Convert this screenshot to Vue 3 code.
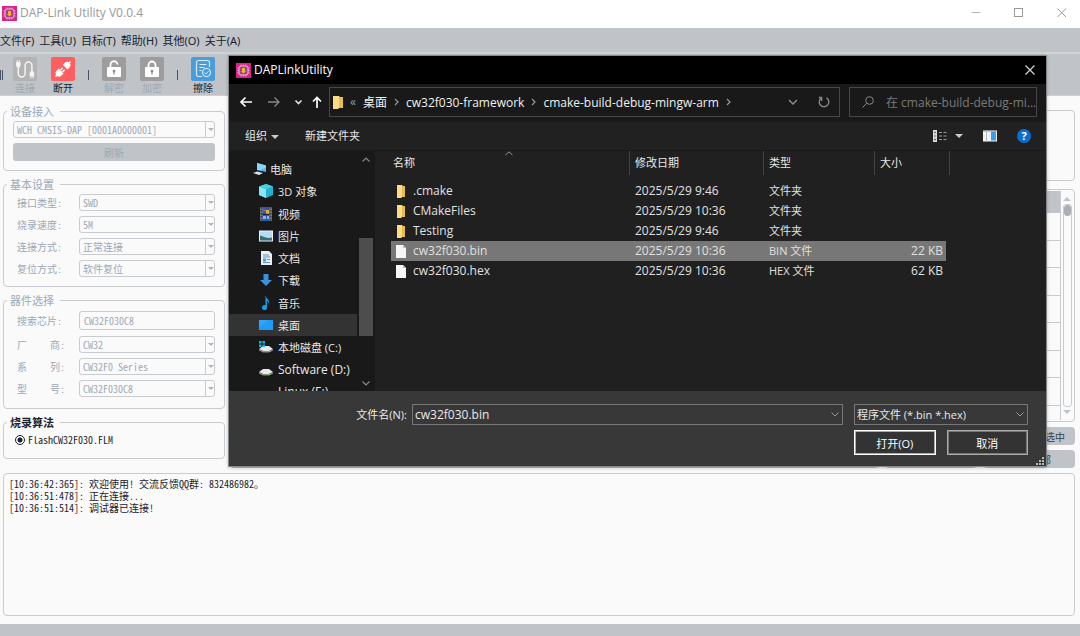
<script setup>
import { ref } from 'vue'

const menus = ['文件(F)', '工具(U)', '目标(T)', '帮助(H)', '其他(O)', '关于(A)']

const basic = [
  { id: 'iface', label: '接口类型:', value: 'SWD' },
  { id: 'speed', label: '烧录速度:', value: '5M' },
  { id: 'connect', label: '连接方式:', value: '正常连接' },
  { id: 'reset', label: '复位方式:', value: '软件复位' },
]
const chip = [
  { id: 'vendor', a: '厂', b: '商:', value: 'CW32' },
  { id: 'series', a: '系', b: '列:', value: 'CW32F0 Series' },
  { id: 'model', a: '型', b: '号:', value: 'CW32F030C8' },
]
const logs = [
  '[10:36:42:365]: 欢迎使用! 交流反馈QQ群: 832486982。',
  '[10:36:51:478]: 正在连接...',
  '[10:36:51:514]: 调试器已连接!',
]
const places = [
  { icon: 'pc', name: '电脑', root: true },
  { icon: 'cube', name: '3D 对象' },
  { icon: 'video', name: '视频' },
  { icon: 'image', name: '图片' },
  { icon: 'doc', name: '文档' },
  { icon: 'down', name: '下载' },
  { icon: 'music', name: '音乐' },
  { icon: 'desk', name: '桌面', active: true },
  { icon: 'diskc', name: '本地磁盘 (C:)' },
  { icon: 'disk', name: 'Software (D:)', latin: true },
  { icon: 'disk', name: 'Linux (E:)', latin: true },
]
const files = [
  { name: '.cmake', date: '2025/5/29 9:46', type: '文件夹', size: '', dir: true },
  { name: 'CMakeFiles', date: '2025/5/29 10:36', type: '文件夹', size: '', dir: true },
  { name: 'Testing', date: '2025/5/29 9:46', type: '文件夹', size: '', dir: true },
  { name: 'cw32f030.bin', date: '2025/5/29 10:36', type: 'BIN 文件', size: '22 KB' },
  { name: 'cw32f030.hex', date: '2025/5/29 10:36', type: 'HEX 文件', size: '62 KB' },
]
const selected = ref('cw32f030.bin')
const fileName = ref('cw32f030.bin')
const keyword = ref('CW32F030C8')
const algo = ref('flash')
</script>

<template>
  <div class="window">
    <header class="titlebar">
      <svg class="appicon" viewBox="0 0 15 15">
        <rect width="15" height="15" fill="#e0218a" />
        <rect x="3" y="3" width="9" height="9" rx="2" fill="#a3427e" stroke="#d9c3e6" stroke-width="1" />
        <path d="M5 1.5v1.5M7.500 1.500v1.500M10 1.500v1.500M5 12v1.500M7.500 12v1.500M10 12v1.500M1.500 5h1.500M1.500 7.500h1.500M1.500 10h1.500M12 5h1.500M12 7.500h1.500M12 10h1.500" stroke="#d9a8dc" stroke-width="1" />
        <path d="M6 5h3v3h1l-2.500 2.500L5 8h1z" fill="#f0b81c" />
      </svg>
      <h1>DAP-Link Utility V0.0.4</h1>
      <div class="winbtns">
        <button aria-label="最小化"><svg viewBox="0 0 10 10"><path d="M.500 4.500h9" stroke="#bbb" /></svg></button>
        <button aria-label="最大化"><svg viewBox="0 0 10 10"><rect x=".5" y=".5" width="8" height="8" fill="none" stroke="#999" /></svg></button>
        <button aria-label="关闭"><svg viewBox="0 0 10 10"><path d="M.500.500l8.500 8.500M9 .500L.500 9" stroke="#999" /></svg></button>
      </div>
    </header>

    <nav class="menubar">
      <button v-for="m in menus" :key="m">{{ m }}</button>
    </nav>

    <div class="toolbar">
      <span class="grip"></span>
      <button class="tool" disabled>
        <svg class="ticon" viewBox="0 0 24 24"><rect width="24" height="24" rx="2" fill="#b3b3b3" /><path d="M5.300 9v7.500a3.400 3.400 0 0 0 6.800 0V8.500a3.400 3.400 0 0 1 6.800 0V15" fill="none" stroke="#f4f4f4" stroke-width="1.500" /><path d="M3 5h4.600v3.500L6.500 10.500H4L3 8.500z" fill="#f4f4f4" /><path d="M4.200 3v2M6.400 3v2" stroke="#f4f4f4" /><path d="M17.700 14h2.500l1 2v3.500h-4.600V16z" fill="#f4f4f4" /><path d="M17.800 19.500v2M20 19.500v2" stroke="#f4f4f4" /></svg>
        <span>连接</span>
      </button>
      <button class="tool">
        <svg class="ticon" viewBox="0 0 24 24"><rect width="24" height="24" rx="2" fill="#ff5f5f" /><g fill="#fff"><path d="M11.800 7.800l4.600 4.600 2-2a3.300 3.300 0 0 0 0-4.600 3.300 3.300 0 0 0-4.600 0z" /><path d="M7.700 11.500l4.900 4.900-2 2a3.400 3.400 0 0 1-4.900-4.900z" /></g><path d="M17.500 6.500L19.500 4.500M4.500 19.500l2-2M9.500 13l2.200-2.200M11.400 14.900l2.200-2.200" stroke="#fff" stroke-width="1.500" /></svg>
        <span>断开</span>
      </button>
      <span class="sep"></span>
      <button class="tool" disabled>
        <svg class="ticon" viewBox="0 0 24 24"><rect width="24" height="24" rx="2" fill="#9d9d9d" /><path d="M8.500 11V8a3.500 3.500 0 0 1 7-.5" fill="none" stroke="#fff" stroke-width="1.800" /><rect x="5" y="10" width="14" height="10" rx="1" fill="#fff" /><path d="M12 14v3.500" stroke="#888" stroke-width="1.200" /><circle cx="12" cy="14" r="1.300" fill="#888" /></svg>
        <span>解密</span>
      </button>
      <button class="tool" disabled>
        <svg class="ticon" viewBox="0 0 24 24"><rect width="24" height="24" rx="2" fill="#9d9d9d" /><path d="M8.500 11V8a3.500 3.500 0 0 1 7 0v3" fill="none" stroke="#fff" stroke-width="1.800" /><rect x="5" y="10" width="14" height="10" rx="1" fill="#fff" /><path d="M12 14v3.500" stroke="#888" stroke-width="1.200" /><circle cx="12" cy="14" r="1.300" fill="#888" /></svg>
        <span>加密</span>
      </button>
      <span class="sep"></span>
      <button class="tool">
        <svg class="ticon" viewBox="0 0 24 24"><rect width="24" height="24" rx="2" fill="#4a9cdb" /><path d="M11 19.500H7.500a2 2 0 0 1-2-2v-12a2 2 0 0 1 2-2h9a2 2 0 0 1 2 2V10M8.500 7.500h7M8.500 10.500h5M8.500 13.500h2" fill="none" stroke="#d6ecfb" stroke-width="1.200" /><circle cx="15.500" cy="15.500" r="4" fill="#4a9cdb" stroke="#d6ecfb" stroke-width="1.200" /><path d="M13.500 15.500l1.500 1.500 2.500-2.800" fill="none" stroke="#d6ecfb" /></svg>
        <span>擦除</span>
      </button>
    </div>

    <main class="content">
      <aside class="left">
        <fieldset class="group" disabled>
          <legend>设备接入</legend>
          <div class="rows">
            <div class="combo"><select aria-label="设备"><option>WCH CMSIS-DAP [0001A0000001]</option></select><i></i></div>
            <button class="refresh">刷新</button>
          </div>
        </fieldset>

        <fieldset class="group" disabled>
          <legend>基本设置</legend>
          <div class="rows">
            <div v-for="b in basic" :key="b.id" class="row">
              <label :for="b.id">{{ b.label }}</label>
              <div class="combo"><select :id="b.id"><option>{{ b.value }}</option></select><i></i></div>
            </div>
          </div>
        </fieldset>

        <fieldset class="group roomy" disabled>
          <legend>器件选择</legend>
          <div class="rows">
            <div class="row find">
              <label for="chip">搜索芯片:</label>
              <input id="chip" v-model="keyword" class="text" type="text">
            </div>
            <div v-for="c in chip" :key="c.id" class="row">
              <label :for="c.id"><span>{{ c.a }}</span><span>{{ c.b }}</span></label>
              <div class="combo"><select :id="c.id"><option>{{ c.value }}</option></select><i></i></div>
            </div>
          </div>
        </fieldset>

        <fieldset class="group roomy live">
          <legend>烧录算法</legend>
          <div class="rows">
            <label class="radio"><input v-model="algo" type="radio" value="flash" name="algo">FlashCW32F030.FLM</label>
          </div>
        </fieldset>
      </aside>

      <section class="right">
        <div class="panel"></div>
        <div class="memory">
          <div class="cells"><div class="head"></div><div v-for="n in 8" :key="n" class="line"></div></div>
          <div class="vscroll"><b class="up"></b><div class="track"><span></span></div><b class="dn"></b></div>
        </div>
        <div class="actions">
          <button></button><button></button><button class="one">选中</button>
          <button></button><button></button><button class="two">部</button>
        </div>
      </section>
    </main>

    <div class="log"><p v-for="l in logs" :key="l">{{ l }}</p></div>
    <footer class="status"></footer>

    <section class="dialog" role="dialog" aria-label="DAPLinkUtility">
      <header class="dtitle">
        <svg class="appicon" viewBox="0 0 15 15">
          <rect width="15" height="15" fill="#e0218a" />
          <rect x="3" y="3" width="9" height="9" rx="2" fill="#a3427e" stroke="#d9c3e6" stroke-width="1" />
          <path d="M5 1.500v1.500M7.500 1.500v1.500M10 1.500v1.500M5 12v1.500M7.500 12v1.500M10 12v1.500M1.500 5h1.500M1.500 7.500h1.500M1.500 10h1.500M12 5h1.500M12 7.500h1.500M12 10h1.500" stroke="#d9a8dc" stroke-width="1" />
          <path d="M6 5h3v3h1l-2.500 2.500L5 8h1z" fill="#f0b81c" />
        </svg>
        <h2>DAPLinkUtility</h2>
        <button aria-label="关闭"><svg viewBox="0 0 10 10"><path d="M.500.500l9 9M9.500.500l-9 9" stroke="#ddd" stroke-width="1.100" /></svg></button>
      </header>

      <div class="dnav">
        <div class="arrows">
          <button aria-label="后退"><svg viewBox="0 0 14 12"><path d="M13 6H2M6.500 1.500L2 6l4.500 4.500" fill="none" stroke="#fff" stroke-width="1.700" /></svg></button>
          <button aria-label="前进"><svg viewBox="0 0 14 12"><path d="M1 6h11M7.500 1.500L12 6l-4.500 4.500" fill="none" stroke="#888" stroke-width="1.300" /></svg></button>
          <button class="small" aria-label="最近"><svg viewBox="0 0 14 12"><path d="M3.500 4.500L6.500 7.500 9.500 4.500" fill="none" stroke="#ddd" stroke-width="1.700" /></svg></button>
          <button class="small" aria-label="向上"><svg viewBox="0 0 14 12"><path d="M7 12V1.500M3 5.500l4-4 4 4" fill="none" stroke="#fff" stroke-width="1.700" /></svg></button>
        </div>
        <div class="address">
          <svg class="folder" viewBox="0 0 10 13"><path d="M0 0h6l1 1h3v11H6l-1 1H0z" fill="#e9bc52" /><path d="M0 0h6v11l-1 2H0z" fill="#fbdc82" /></svg>
          <span class="chev">«</span>
          <a href="#">桌面</a>
          <svg class="cr" viewBox="0 0 6 8"><path d="M1 1l3 3-3 3" fill="none" stroke="#999" stroke-width="1.200" /></svg>
          <a href="#">cw32f030-framework</a>
          <svg class="cr" viewBox="0 0 6 8"><path d="M1 1l3 3-3 3" fill="none" stroke="#999" stroke-width="1.200" /></svg>
          <a href="#">cmake-build-debug-mingw-arm</a>
          <svg class="cr" viewBox="0 0 6 8"><path d="M1 1l3 3-3 3" fill="none" stroke="#999" stroke-width="1.200" /></svg>
          <div class="aend">
            <button aria-label="历史"><svg viewBox="0 0 12 12"><path d="M2 4l4 4 4-4" fill="none" stroke="#888" stroke-width="1.500" /></svg></button>
            <button aria-label="刷新"><svg viewBox="0 0 12 12"><path d="M8.500 1.800A4.800 4.800 0 1 1 3.300 2M3.600 5V1.500H.800" fill="none" stroke="#888" stroke-width="1.400" /></svg></button>
          </div>
        </div>
        <label class="search">
          <svg viewBox="0 0 12 12"><circle cx="7.500" cy="4.500" r="3.800" fill="none" stroke="#888" /><path d="M4.800 7.200L.500 11.500" stroke="#888" /></svg>
          <input type="text" placeholder="在 cmake-build-debug-mi..." aria-label="搜索">
        </label>
      </div>

      <div class="dtools">
        <button>组织<i class="tri"></i></button>
        <button class="newdir">新建文件夹</button>
        <div class="views">
          <button aria-label="视图"><svg class="v1" viewBox="0 0 14 12"><rect width="4" height="12" fill="#ddd" /><path d="M1 2.500h2" stroke="#777" stroke-width="1.500" /><path d="M1 6h2" stroke="#5a8" stroke-width="1.500" /><path d="M1 9.500h2" stroke="#d43" stroke-width="1.500" /><path d="M6 2.500h3M10.500 2.500h3M6 6h3M10.500 6h3M6 9.500h3M10.500 9.500h3" stroke="#999" /></svg></button>
          <button class="more" aria-label="更多"><i class="tri"></i></button>
          <button class="pv" aria-label="预览"><svg class="v1" viewBox="0 0 14 11"><rect width="14" height="11" fill="#f2f2f2" /><rect width="14" height="1" fill="#9a9a9a" /><path d="M3.500 1v10" stroke="#bbb" /><rect x="8" y="1" width="5" height="9" fill="#3d9be9" /></svg></button>
          <button class="help" aria-label="帮助">?</button>
        </div>
      </div>

      <div class="dbody">
        <div class="tree">
          <ul>
            <li v-for="p in places" :key="p.name" :class="{ root: p.root, active: p.active, latin: p.latin }">
              <svg viewBox="0 0 14 14">
                <template v-if="p.icon === 'pc'"><path d="M4 1l9 2.500v6.500L4 8z" fill="#58b7ef" /><path d="M4 1l9 2.500v2L7 8.500 4 8z" fill="#8ad3fa" /><path d="M0 11l4-1.500 6 1.500-4 2z" fill="#dfe3e6" /></template>
                <template v-else-if="p.icon === 'cube'"><path d="M7 0l7 2.500v8.500L7 14 0 11V2.500z" fill="#1fb3cf" /><path d="M0 2.500L7 5v9L0 11z" fill="#8be6f3" /><path d="M0 2.500L7 0l7 2.500L7 5z" fill="#49cfe2" /></template>
                <template v-else-if="p.icon === 'video'"><rect x="1" width="12" height="14" fill="#777" /><rect x="3.500" width="7" height="14" fill="#2a57b5" /><path d="M4 2h3v3H4z" fill="#c9452f" /><path d="M7 3h3v4H7z" fill="#e4ae3b" /><path d="M4 9h3v3H4zM8 9h2v3H8z" fill="#7eb7f0" /><path d="M3.500 7.300h7" stroke="#222" /><path d="M2.200 0v14M11.800 0v14" stroke="#222" stroke-dasharray="1.500" /></template>
                <template v-else-if="p.icon === 'image'"><rect y="1.500" width="14" height="11" fill="#f0f0f0" /><rect x="1" y="2.500" width="12" height="9" fill="#b5dcf5" /><path d="M1 6.500c4 1 7 3.500 12 2v3H1z" fill="#3d6d71" /></template>
                <template v-else-if="p.icon === 'doc'"><path d="M2 0h8l3 3v11H2z" fill="#eee" /><path d="M4 4h6M4 6h7M4 11.500h7" stroke="#4d9bd5" /><rect x="4" y="7.500" width="3" height="3" fill="#4d9bd5" /><path d="M8 8.500h3" stroke="#88a" /></template>
                <template v-else-if="p.icon === 'down'"><path d="M4.500 1h5v6H13l-6 6-6-6h3.500z" fill="#3a92dc" /></template>
                <template v-else-if="p.icon === 'music'"><path d="M7 0c0 3 4 3.500 3 8-.3-2-1.500-2.800-2-3v6.500a2.500 2.500 0 1 1-1.500-2.200V0z" fill="#1c9cf0" /></template>
                <template v-else-if="p.icon === 'desk'"><rect y="2" width="14" height="10" fill="#1e9bf5" /><path d="M0 9.500V2h10z" fill="#3cb0ff" opacity=".5" /></template>
                <template v-else><path d="M0 9l4-3h6l4 3-4 2H4z" fill="#e8e8e8" /><path d="M0 9l4 2h6l4-2v1.500L10 12.500H4L0 10.500z" fill="#8b8b8b" /><path d="M9.500 11.500h2" stroke="#4d5" /></template>
                <path v-if="p.icon === 'diskc'" d="M0 1h2.500v2.500H0zM3.500 1H6v2.500H3.500zM0 4.500h2.500V7H0zM3.500 4.500H6V7H3.500z" fill="#15b5e8" />
              </svg>
              <span>{{ p.name }}</span>
            </li>
          </ul>
          <div class="tscroll">
            <svg viewBox="0 0 8 5"><path d="M.500 4.500L4 1l3.500 3.500" fill="none" stroke="#888" stroke-width="1.200" /></svg>
            <span></span>
            <svg viewBox="0 0 8 5"><path d="M.500.500L4 4 7.500.500" fill="none" stroke="#888" stroke-width="1.200" /></svg>
          </div>
        </div>

        <div class="files">
          <table>
            <colgroup><col class="c1"><col class="c2"><col class="c3"><col class="c4"></colgroup>
            <thead>
              <tr>
                <th>名称<svg class="sort" viewBox="0 0 8 5"><path d="M.500 4L4 .800 7.500 4" fill="none" stroke="#999" /></svg></th>
                <th>修改日期</th><th>类型</th><th>大小</th>
              </tr>
            </thead>
            <tbody>
              <tr v-for="f in files" :key="f.name" :class="{ sel: f.name === selected }" @click="selected = f.name">
                <td>
                  <span class="fname">
                    <svg v-if="f.dir" viewBox="0 0 10 13"><path d="M1 0h5l1 1h2v11H6l-1 1H1z" fill="#e9bc52" /><path d="M1 0h5v11l-1 2H1z" fill="#fbdc82" /></svg>
                    <svg v-else viewBox="0 0 10 13"><path d="M0 0h7l3 3v10H0z" fill="#f6f6f6" /><path d="M7 0v3h3z" fill="#bbb" /></svg>
                    {{ f.name }}
                  </span>
                </td>
                <td>{{ f.date }}</td><td class="type">{{ f.type }}</td><td>{{ f.size }}</td>
              </tr>
            </tbody>
          </table>
        </div>
      </div>

      <footer class="dfoot">
        <label for="fname">文件名(N):</label>
        <div class="field name"><input id="fname" v-model="fileName" type="text"><svg viewBox="0 0 8 5"><path d="M.500.500L4 4 7.500.500" fill="none" stroke="#999" /></svg></div>
        <div class="field"><select aria-label="文件类型"><option>程序文件 (*.bin *.hex)</option></select><svg viewBox="0 0 8 5"><path d="M.500.500L4 4 7.500.500" fill="none" stroke="#999" /></svg></div>
        <div class="dbtns"><button class="ok">打开(O)</button><button>取消</button></div>
        <svg class="grabber" viewBox="0 0 9 9"><path d="M6 0h2v2H6zM3 3h2v2H3zM6 3h2v2H6zM0 6h2v2H0zM3 6h2v2H3zM6 6h2v2H6z" fill="#bbb" /></svg>
      </footer>
    </section>
  </div>
</template>

<style>
body { margin: 0; background: #fafafa; }
</style>

<style scoped>
* { box-sizing: border-box; }
button, input, select { font: inherit; color: inherit; margin: 0; padding: 0; border: 0; background: none; border-radius: 0; }
h1, h2, p, ul { margin: 0; padding: 0; font-weight: 400; }
svg { display: block; flex: none; }

.window {
  position: relative;
  display: flex;
  flex-direction: column;
  min-height: 100vh;
  background: #fafafa;
  font-family: "Noto Sans Mono CJK SC", "Noto Sans CJK SC", monospace;
  font-size: 10px;
  color: #32414b;
  overflow: hidden;
}
.titlebar { display: flex; align-items: center; height: 28px; padding: 0 0 2px 2px; background: #fff; font-family: "Open Sans", "Noto Sans CJK SC", sans-serif; }
.appicon { width: 15px; height: 15px; }
.titlebar h1 { margin-left: 3px; font-size: 12px; line-height: 16px; color: #999; }
.winbtns { display: flex; margin: 0 -3px 0 auto; }
.winbtns button { width: 43px; height: 26px; display: grid; place-items: center; }
.winbtns svg { width: 10px; height: 10px; }

.menubar { display: flex; gap: 5px; height: 26px; background: #c0c4c8; border-bottom: 2px solid #d0d3d6; font-family: "Noto Sans", "Noto Sans CJK SC", sans-serif; font-size: 11px; color: #19232d; }
.toolbar { display: flex; height: 42px; background: #c0c4c8; font-family: "Noto Sans CJK SC", sans-serif; font-size: 10px; color: #19232d; border-bottom: 1px solid #ccd0d3; }
.grip { width: 3px; height: 10px; margin: 16px 3px 0 0; border: solid #455364; border-width: 0 1px; }
.tool { width: 38px; display: flex; flex-direction: column; align-items: center; justify-content: flex-start; padding-top: 3px; }
.tool span { line-height: 14px; }
.tool:disabled { color: #9da9b5; }
.ticon { width: 24px; height: 24px; }
.sep { width: 1px; height: 10px; margin: 16px 6px 0; background: #455364; }

.content { display: flex; gap: 5px; padding: 6px 5px 0 3px; }
.left { width: 222px; flex: none; display: flex; flex-direction: column; gap: 4px; }
.group { margin: 0; padding: 0 3px 9px; border: 1px solid #c8ccd0; border-radius: 4px; color: #9da9b5; min-width: 0; }
.group.roomy { padding-bottom: 11px; }
.group legend { padding: 0 6px 0 3px; font-size: 11px; line-height: 18px; font-weight: 500; }
.group.live { color: #19232d; }
.live legend { font-weight: 700; }
.rows { display: flex; flex-direction: column; gap: 5px; padding: 1px 6px 0; }
.row { display: flex; align-items: center; }
.row label { width: 48px; margin: 0 14px 0 4px; white-space: nowrap; display: flex; justify-content: space-between; line-height: 16px; }
.find { height: 21px; }
.combo { position: relative; flex: 1; display: flex; }
.combo select, .text { appearance: none; width: 100%; height: 17px; padding: 0 3px; border: 1px solid #c8ccd0; border-radius: 3px; color: #9da9b5; opacity: 1; line-height: 15px; }
.text { height: 19px; padding: 0 4px; flex: 1; min-width: 0; }
.combo i { position: absolute; right: 0; top: 1px; bottom: 1px; width: 10px; border-left: 1px solid #c8ccd0; display: grid; place-items: center; }
.combo i::after { content: ""; border: 3px solid transparent; border-bottom: 0; border-top-color: #b0b6bc; }
.refresh { height: 18px; border-radius: 3px; background: #c0c4c8; color: #9da9b5; }
.radio { display: flex; align-items: center; height: 15px; padding-left: 2px; }
.radio input { appearance: none; width: 10px; height: 10px; margin: 0 3px 0 0; border: 1px solid #19232d; border-radius: 50%; background: radial-gradient(circle, #19232d 0 2px, #fafafa 3px); }

.right { flex: 1; min-width: 0; display: flex; flex-direction: column; padding-top: 8px; }
.panel { height: 71px; border: 1px solid #c8ccd0; border-radius: 4px; }
.memory { display: flex; height: 233px; margin-top: 8px; padding: 1px; border: 1px solid #c8ccd0; border-radius: 4px; overflow: hidden; }
.cells { flex: 1; display: flex; flex-direction: column; border-right: 1px solid #c8ccd0; overflow: hidden; }
.head { height: 22px; flex: none; background: #c0c4c8; }
.line { flex: 1 0 27px; border-bottom: 1px solid #c8ccd0; }
.line:last-child { flex: 0 1 14px; border: 0; }
.vscroll { width: 12px; display: flex; flex-direction: column; align-items: center; padding: 6px 0; gap: 3px; }
.vscroll b { border: 4px solid transparent; }
.vscroll .up { border-top: 0; border-bottom-color: #c0c4c8; }
.vscroll .dn { border-bottom: 0; border-top-color: #c0c4c8; }
.track { flex: 1; width: 9px; border: 1px solid #c8ccd0; border-radius: 3px; }
.track span { display: block; height: 11px; border-radius: 4px; background: #a9afb5; }
.actions { display: grid; grid-template-columns: 1fr 92px 92px; gap: 5px 6px; padding-top: 5px; font-family: "Noto Sans CJK SC", sans-serif; }
.actions button { height: 18px; border-radius: 4px; background: #c0c4c8; color: #32414b; text-align: right; }
.actions .one { padding-right: 10px; }
.actions .two { padding-right: 24px; }

.log { flex: 1; margin: 5px 5px 8px 3px; padding: 4px 5px; border: 1px solid #c8ccd0; border-radius: 4px; line-height: 12px; color: #19232d; white-space: pre; }
.status { height: 12px; background: #c0c4c8; }

.dialog { position: absolute; left: 229px; right: 34px; top: 56px; display: flex; flex-direction: column; background: #202020; color: #e8e8e8; font-family: "Open Sans", "Noto Sans CJK SC", sans-serif; font-size: 12px; box-shadow: 0 0 0 1px #85888b, 0 1px 4px rgba(0, 0, 0, .4); }
.dtitle { display: flex; align-items: center; height: 28px; padding: 0 11px 0 7px; background: #000; }
.dtitle h2 { margin-left: 3px; font-size: 12px; line-height: 16px; padding-bottom: 1px; color: #fff; }
.dtitle button { margin-left: auto; }
.dtitle button svg { width: 10px; height: 10px; }

.dnav { display: flex; height: 38px; padding: 3px 9px 5px 10px; background: #191919; }
.arrows { display: flex; align-items: center; width: 90px; }
.arrows button { width: 29px; display: flex; }
.arrows .small { width: 19px; }
.arrows .small:nth-child(3) { margin-left: -4px; }
.arrows svg { width: 14px; height: 12px; }
.address { display: flex; align-items: center; flex: 1; border: 1px solid #474747; padding-left: 3px; min-width: 0; white-space: nowrap; }
.address a { color: #f0f0f0; text-decoration: none; }
.folder { width: 10px; height: 13px; }
.chev { margin: 0 7px; color: #999; line-height: 20px; }
.cr { width: 6px; height: 8px; margin: 0 6px 0 7px; }
.aend { display: flex; gap: 19px; margin-left: auto; padding-right: 9px; }
.aend svg { width: 12px; height: 12px; }
.search { display: flex; align-items: center; width: 188px; margin-left: 9px; padding-left: 12px; border: 1px solid #474747; }
.search svg { width: 12px; height: 12px; }
.search input { flex: 1; min-width: 0; margin-left: 12px; outline: 0; }
.search input::placeholder { color: #7a7a7a; opacity: 1; }

.dtools { display: flex; align-items: center; height: 29px; padding: 0 15px 0 16px; background: #212121; border-bottom: 1px solid #191919; font-size: 11px; line-height: 16px; }
.tri { display: inline-block; border: 4px solid transparent; border-bottom: 0; border-top-color: #ccc; vertical-align: middle; margin-left: 4px; }
.newdir { margin-left: 26px; }
.views { display: flex; align-items: center; margin-left: auto; }
.v1 { width: 14px; height: 12px; }
.more { margin-left: 4px; display: flex; }
.pv { margin: 0 20px; }
.help { width: 14px; height: 14px; border-radius: 50%; background: #0a6ed1; color: #fff; font-size: 11px; line-height: 14px; font-weight: 700; }

.dbody { display: flex; height: 240px; overflow: hidden; }
.tree { display: flex; width: 146px; flex: none; height: 240px; background: #191919; overflow: hidden; }
.tree ul { flex: 1; display: grid; grid-template-rows: repeat(11, 1fr); height: 245px; margin-top: 7px; list-style: none; font-size: 11px; }
.tree li { display: flex; align-items: center; padding-left: 30px; white-space: nowrap; }
.tree li.latin { font-size: 12px; }
.tree li.root { padding-left: 24px; }
.tree li.root span { margin-left: 3px; }
.tree li.active { background: #333; }
.tree li svg { width: 14px; height: 14px; }
.tree li span { margin-left: 5px; }
.tscroll { width: 18px; display: flex; flex-direction: column; align-items: center; padding: 6px 0 5px; }
.tscroll svg { width: 8px; height: 5px; }
.tscroll span { width: 14px; height: 98px; margin: 76px 0 auto; background: #4d4d4d; }
.files { flex: 1; padding-left: 16px; font-size: 12px; }
table { width: 558px; table-layout: fixed; border-spacing: 0; }
.c1 { width: 239px; }
.c2 { width: 134px; }
.c3 { width: 111px; }
.c4 { width: 75px; }
th { position: relative; height: 24px; padding: 0 0 0 5px; border-right: 1px solid #444; text-align: left; font-size: 11px; font-weight: 400; line-height: 16px; }
th:first-child { padding-left: 2px; }
.sort { position: absolute; left: 114px; top: 0; width: 8px; height: 5px; }
tbody::before { content: ""; display: block; height: 6px; }
td { height: 20px; padding: 0 0 0 5px; line-height: 16px; white-space: nowrap; color: #e0e0e0; }
td.type { font-size: 11px; }
td:last-child { padding: 0 3px 0 0; text-align: right; border-right: 4px solid transparent; background-clip: padding-box; }
.sel td { background-color: #777; }
.fname { display: flex; align-items: center; gap: 7px; }
.fname svg { width: 10px; height: 13px; }

.dfoot { position: relative; display: grid; grid-template-columns: 178px 1fr 174px; row-gap: 5px; padding: 13px 18px 11px 0; background: #383838; font-size: 11px; }
.dfoot > label { text-align: right; line-height: 21px; }
.field { position: relative; display: flex; align-items: center; height: 21px; margin: 0 11px 0 5px; border: 1px solid #777; background: #383838; }
.field.name { font-size: 12px; }
.field + .field { margin: 0; }
.field input, .field select { appearance: none; flex: 1; min-width: 0; height: 19px; padding: 0 2px; outline: 0; }
.field svg { width: 8px; height: 5px; margin-right: 3px; }
.dbtns { grid-column: 3; display: grid; grid-template-columns: 1fr 1fr; gap: 11px; }
.dbtns button { height: 25px; border: 1px solid #aaa; background: #333; box-shadow: inset 0 0 0 1px #777; color: #fff; }
.dbtns .ok { border-color: #fff; box-shadow: inset 0 0 0 1px #aaa; }
.grabber { position: absolute; right: 1px; bottom: 0; width: 9px; height: 9px; }
</style>
